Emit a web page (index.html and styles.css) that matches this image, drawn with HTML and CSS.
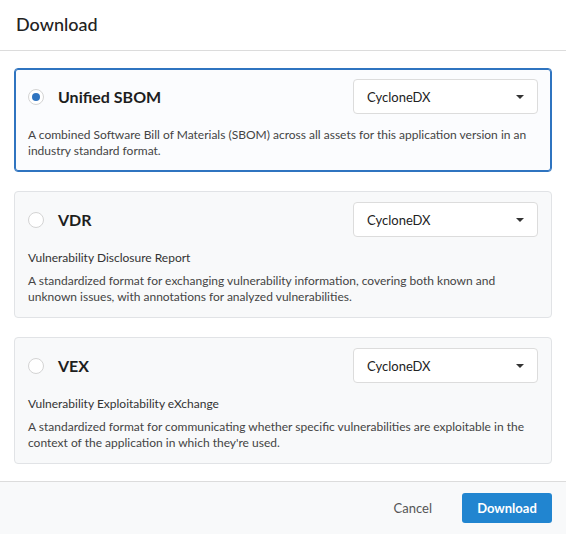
FILE: index.html
```html
<!DOCTYPE html>
<html lang="en">
<head>
<meta charset="utf-8">
<title>Download</title>
<link rel="stylesheet" href="styles.css">
</head>
<body>
<div class="modal">
  <header class="modal-header">Download</header>
  <div class="modal-body">
    <div class="option selected">
      <div class="option-head">
        <span class="radio checked"></span>
        <span class="option-title">Unified SBOM</span>
        <div class="select"><span>CycloneDX</span><span class="caret"></span></div>
      </div>
      <p class="desc">A combined Software Bill of Materials (SBOM) across all assets for this application version in an industry standard format.</p>
    </div>
    <div class="option">
      <div class="option-head">
        <span class="radio"></span>
        <span class="option-title">VDR</span>
        <div class="select"><span>CycloneDX</span><span class="caret"></span></div>
      </div>
      <p class="subtitle">Vulnerability Disclosure Report</p>
      <p class="desc">A standardized format for exchanging vulnerability information, covering both known and unknown issues, with annotations for analyzed vulnerabilities.</p>
    </div>
    <div class="option">
      <div class="option-head">
        <span class="radio"></span>
        <span class="option-title">VEX</span>
        <div class="select"><span>CycloneDX</span><span class="caret"></span></div>
      </div>
      <p class="subtitle">Vulnerability Exploitability eXchange</p>
      <p class="desc">A standardized format for communicating whether specific vulnerabilities are exploitable in the context of the application in which they're used.</p>
    </div>
  </div>
  <footer class="modal-footer">
    <button class="btn btn-text">Cancel</button>
    <button class="btn btn-primary">Download</button>
  </footer>
</div>
</body>
</html>
```

FILE: styles.css
```css
* { box-sizing: border-box; }
html, body { margin: 0; padding: 0; background: #ffffff; }
body {
  font-family: Lato, "Open Sans", sans-serif;
  color: #222;
  width: 566px;
  height: 534px;
  overflow: hidden;
}
.modal {
  display: flex;
  flex-direction: column;
  height: 534px;
}
.modal-header {
  height: 51px;
  padding: 0 16px 3px 16px;
  display: flex;
  align-items: center;
  font-size: 18px;
  font-weight: 500;
  color: #222;
  border-bottom: 1px solid #dcdcdc;
}
.modal-body {
  flex: 1;
  padding: 17px 14px 0 14px;
  display: flex;
  flex-direction: column;
  gap: 19px;
}
.option {
  border: 1px solid #e1e3e6;
  border-radius: 4px;
  background: #f8f9fa;
  padding: 10px 13px 12px 13px;
}
.option.selected {
  border-color: #2f74c0;
  box-shadow: inset 0 0 0 1px #2f74c0;
  background: #fbfcfe;
  padding-bottom: 12px;
}
.option-head {
  display: flex;
  align-items: center;
  height: 35px;
}
.radio {
  width: 16px;
  height: 16px;
  border-radius: 50%;
  border: 1px solid #d4d4d4;
  background: #fff;
  flex: none;
  position: relative;
}
.radio.checked::after {
  content: "";
  position: absolute;
  left: 3px;
  top: 3px;
  width: 8px;
  height: 8px;
  border-radius: 50%;
  background: #2f74c0;
}
.option-title {
  margin-left: 14px;
  font-size: 16px;
  font-weight: 700;
  color: #1e1e1e;
  flex: 1;
}
.select {
  width: 185px;
  height: 35px;
  border: 1px solid #dcdcdc;
  border-radius: 4px;
  background: #fff;
  display: flex;
  align-items: center;
  justify-content: space-between;
  padding: 0 13px 0 13px;
  font-size: 13px;
  color: #222;
}
.caret {
  width: 0;
  height: 0;
  border-left: 4px solid transparent;
  border-right: 4px solid transparent;
  border-top: 4px solid #333;
}
.subtitle {
  margin: 13px 0 0 0;
  font-size: 12px;
  line-height: 16px;
  color: #333;
}
.desc {
  margin: 13px 0 0 0;
  font-size: 12px;
  line-height: 16px;
  color: #444;
}
.subtitle + .desc { margin-top: 7px; }
.modal-footer {
  height: 53px;
  border-top: 1px solid #dcdcdc;
  background: #f8f9fa;
  display: flex;
  align-items: center;
  justify-content: flex-end;
  padding: 0 14px 0 0;
  gap: 14px;
}
.btn {
  font-family: Lato, "Open Sans", sans-serif;
  font-size: 13px;
  border: none;
  cursor: pointer;
}
.btn-text {
  background: transparent;
  color: #555;
  padding: 0 16px;
  height: 30px;
}
.btn-primary {
  background: #2185d0;
  color: #fff;
  font-weight: 700;
  width: 90px;
  height: 30px;
  border-radius: 3px;
}
```
